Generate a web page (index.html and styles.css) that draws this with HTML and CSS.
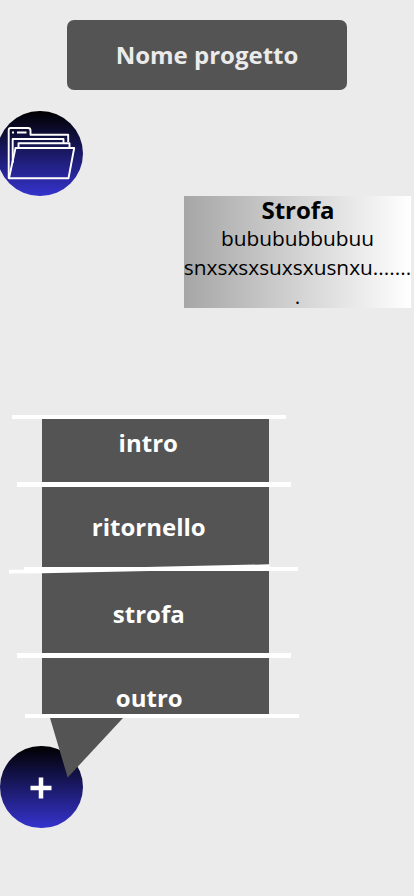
FILE: index.html
```html
<!DOCTYPE html>
<html lang="it">
<head>
<meta charset="utf-8">
<title>Nome progetto</title>
<link rel="stylesheet" href="styles.css">
</head>
<body>
<main class="screen">
  <h1 class="title">Nome progetto</h1>
  <button class="round folder" aria-label="Cartella">
    <svg width="86" height="86" viewBox="-3 111 86 86" fill="none" stroke="#fff" stroke-width="1.900" stroke-linejoin="round">
      <path d="M8.700 178.200V130q0-2 2-2H28q2.500 0 2.500 2.500V134.700H68.200V142"/>
      <path d="M12.700 163V139H63.500V142.500M18.500 147V143.200H69.500V147"/>
      <path d="M15.500 148H74.200L68.500 178.200H9Z"/>
      <path d="M12 132.500h2M17 132.500h9.500"/>
    </svg>
  </button>
  <section class="verse">
    <h2>Strofa</h2>
    <p>bubububbubuu</p>
    <p>snxsxsxsuxsxusnxu.......</p>
    <p>.</p>
  </section>
  <nav class="menu">
    <div class="rule r1"></div>
    <div class="item intro"><span>intro</span></div>
    <div class="rule r2"></div>
    <div class="item ritornello"><span>ritornello</span></div>
    <div class="rule r3"></div>
    <div class="item strofa"><span>strofa</span></div>
    <div class="rule r4"></div>
    <div class="item outro"><span>outro</span></div>
    <div class="rule r5"></div>
    <svg class="slant" width="261" height="10" viewBox="8.500 563.500 261 10"><path fill="#fff" d="M8.500 569.200H24L269 563.800V568L42 572.700L8.500 573Z"/></svg>
    <svg class="pointer" width="73" height="60" viewBox="0 0 73 60"><path fill="#545454" d="M0 0H73L17.700 59.500Z"/></svg>
  </nav>
  <button class="round add" aria-label="Aggiungi">
    <svg width="22" height="22" viewBox="0 0 22 22"><path stroke="#fff" stroke-width="4.500" d="M11 .5V21.500M.5 11H21.500"/></svg>
  </button>
</main>
</body>
</html>
```
FILE: styles.css
```css
* { box-sizing: border-box; margin: 0; padding: 0; }

body {
  background: #ebebeb;
  font-family: "Open Sans", sans-serif;
}

.screen {
  width: 414px;
  height: 896px;
  padding-top: 20px;
  overflow: hidden;
  display: flex;
  flex-direction: column;
  align-items: flex-start;
}

.title {
  width: 280px;
  height: 70px;
  margin-left: 67px;
  border-radius: 7px;
  background: #545454;
  color: #ebebeb;
  font-size: 24px;
  line-height: 70px;
  text-align: center;
}

.round {
  display: flex;
  align-items: center;
  justify-content: center;
  border: 0;
  border-radius: 50%;
  background: linear-gradient(#000, #3533cd);
}

.round svg { flex: none; }

.folder {
  width: 85.500px;
  height: 85px;
  margin: 21px 0 0 -3px;
  align-items: flex-start;
  justify-content: flex-start;
}

.verse {
  width: 227px;
  height: 112px;
  margin-left: 184px;
  background: linear-gradient(90deg, #a6a6a6, #fff);
  color: #000;
  text-align: center;
  white-space: nowrap;
}

.verse h2 { padding-left: 1px; font-size: 24px; line-height: 28px; }
.verse p { margin: 0 -2px; font-size: 20.850px; line-height: 29px; }

.menu {
  position: relative;
  z-index: 1;
  width: 299px;
  height: 303px;
  margin-top: 107px;
}

.rule { position: relative; width: 274px; height: 4px; background: #fff; }
.r1 { margin-left: 12.400px; }
.r2 { margin-left: 17px; height: 5px; }
.r3 { margin-left: 24px; }
.r4 { margin-left: 17px; height: 5px; }
.r5 { margin-left: 25px; }

.item {
  width: 227.500px;
  margin-left: 41.500px;
  background: #545454;
  color: #fff;
  font-size: 24px;
  font-weight: 700;
  line-height: 34px;
  text-align: center;
}

.item span { display: block; }
.intro { height: 63px; padding: 7px 14px 0 0; }
.ritornello { height: 80px; padding: 23px 13px 0 0; }
.strofa { height: 82px; padding: 26px 13px 0 0; }
.outro { height: 56px; padding: 23px 12px 0 0; }

.slant { position: absolute; left: 8.500px; top: 148.500px; }
.pointer { position: absolute; left: 49.700px; top: 303px; }

.add {
  width: 82.500px;
  height: 82.500px;
  margin-top: 27.500px;
  padding-top: 2px;
}
```
